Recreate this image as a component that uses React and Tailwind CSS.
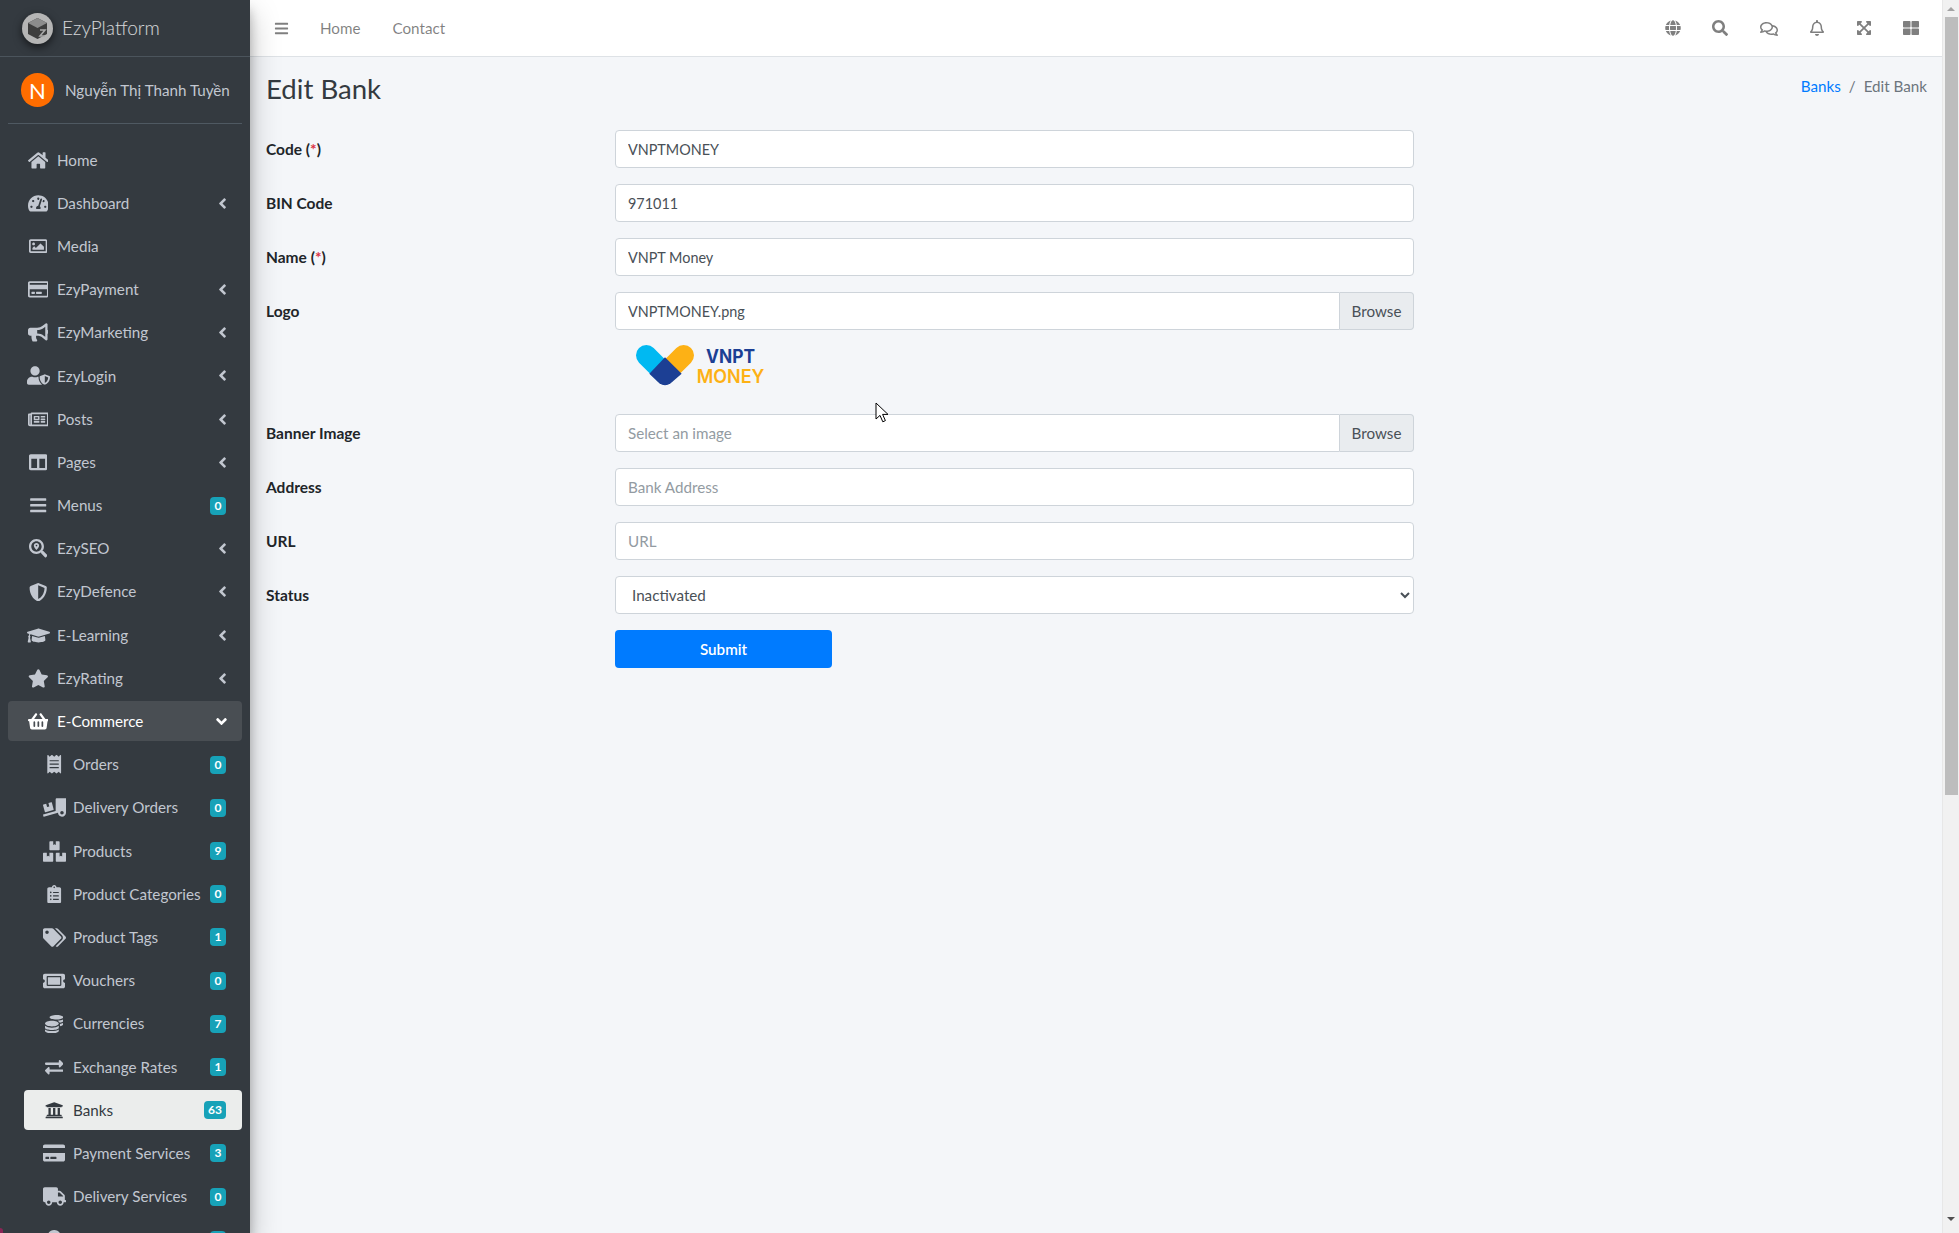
import {
  FaAngleDown,
  FaAngleLeft,
  FaBars,
  FaBoxes,
  FaBullhorn,
  FaClipboardList,
  FaCoins,
  FaColumns,
  FaCreditCard,
  FaExchangeAlt,
  FaExpandArrowsAlt,
  FaGlobe,
  FaGraduationCap,
  FaHome,
  FaMapMarkerAlt,
  FaReceipt,
  FaRegBell,
  FaRegComments,
  FaRegCreditCard,
  FaRegImage,
  FaRegNewspaper,
  FaSearch,
  FaSearchLocation,
  FaShieldAlt,
  FaShoppingBasket,
  FaStar,
  FaTachometerAlt,
  FaTags,
  FaThLarge,
  FaTicketAlt,
  FaTruck,
  FaTruckLoading,
  FaUniversity,
  FaUserShield,
} from 'react-icons/fa';

// icons share one height, so the wider glyphs need a bigger square
const WIDE = 20.7;
const WIDEST = 23;

const TOP_ITEMS = [
  { label: 'Home', icon: FaHome, size: WIDE },
  { label: 'Dashboard', icon: FaTachometerAlt, size: WIDE, arrow: true },
  { label: 'Media', icon: FaRegImage },
  { label: 'EzyPayment', icon: FaRegCreditCard, size: WIDE, arrow: true },
  { label: 'EzyMarketing', icon: FaBullhorn, size: WIDE, arrow: true },
  { label: 'EzyLogin', icon: FaUserShield, size: WIDEST, arrow: true },
  { label: 'Posts', icon: FaRegNewspaper, size: WIDE, arrow: true },
  { label: 'Pages', icon: FaColumns, arrow: true },
  { label: 'Menus', icon: FaBars, badge: 0 },
  { label: 'EzySEO', icon: FaSearchLocation, arrow: true },
  { label: 'EzyDefence', icon: FaShieldAlt, arrow: true },
  { label: 'E-Learning', icon: FaGraduationCap, size: WIDEST, arrow: true },
  { label: 'EzyRating', icon: FaStar, size: WIDE, arrow: true },
];

const SHOP_ITEMS = [
  { label: 'Orders', icon: FaReceipt, badge: 0 },
  { label: 'Delivery Orders', icon: FaTruckLoading, size: WIDEST, badge: 0 },
  { label: 'Products', icon: FaBoxes, size: WIDEST, badge: 9 },
  { label: 'Product Categories', icon: FaClipboardList, badge: 0 },
  { label: 'Product Tags', icon: FaTags, size: WIDEST, badge: 1 },
  { label: 'Vouchers', icon: FaTicketAlt, size: 22, badge: 0 },
  { label: 'Currencies', icon: FaCoins, badge: 7 },
  { label: 'Exchange Rates', icon: FaExchangeAlt, badge: 1 },
  { label: 'Banks', icon: FaUniversity, badge: 63, current: true },
  { label: 'Payment Services', icon: FaCreditCard, size: 22, badge: 3 },
  { label: 'Delivery Services', icon: FaTruck, size: WIDEST, badge: 0 },
  // only the top sliver of this row is on screen
  { label: '', icon: FaMapMarkerAlt, badge: '' },
];

const TOOLS = [
  { icon: FaGlobe, box: 'w-[47.6px]' },
  { icon: FaSearch, box: 'w-[47.6px]' },
  { icon: FaRegComments, box: 'w-[48.6px]', size: 18 },
  { icon: FaRegBell, box: 'w-[48.6px]' },
  { icon: FaExpandArrowsAlt, box: 'w-[46px]' },
  { icon: FaThLarge, box: 'w-[46.6px]' },
];

function NavRow({ item, sub, open }) {
  const Icon = item.icon;
  let tone = 'text-[#c2c7d0]';
  if (open) tone = 'bg-[#494e53] text-white';
  if (item.current) tone = 'bg-[#ebedec] text-[#343a40]';

  return (
    <div className={`${sub ? 'ml-4' : ''} mb-[3.2px] flex h-10 shrink-0 items-center rounded pl-4 pr-4 ${tone}`}>
      <span className="mr-[5px] flex w-7 shrink-0 justify-center">
        <Icon size={item.size || 18.4} className="shrink-0" />
      </span>
      <span className="flex-1 whitespace-nowrap">{item.label}</span>
      {item.badge !== undefined && (
        <span className="flex h-[18px] min-w-4 items-center justify-center rounded bg-[#17a2b8] px-1 text-[12px] font-bold leading-none text-white">
          {item.badge}
        </span>
      )}
      {item.arrow && (
        <span className="flex w-[7px] justify-center">
          <FaAngleLeft size={17} className="shrink-0" />
        </span>
      )}
      {open && (
        <span className="flex w-[9px] justify-center">
          <FaAngleDown size={17} className="shrink-0" />
        </span>
      )}
    </div>
  );
}

function Sidebar() {
  return (
    <aside className="relative z-10 flex h-screen w-[250px] shrink-0 flex-col overflow-hidden bg-[#343a40] shadow-[0_14px_28px_rgba(0,0,0,0.25),0_10px_10px_rgba(0,0,0,0.22)]">
      <div className="flex h-[57px] shrink-0 items-center border-b border-[#4b545c] pl-[22px]">
        <svg width="31" height="31" viewBox="0 0 31 31" className="drop-shadow-[0_3px_4px_rgba(0,0,0,0.6)]">
          <circle cx="15.5" cy="15.5" r="15.5" fill="#b5b5b5" />
          <path d="M15.5 5 25 10v11l-9.5 5L6 21V10z" fill="#3d3d3d" />
          <path d="M15.5 5 25 10l-9.5 5L6 10z" fill="#8c8c8c" />
          <path d="M18 17h5l-5 6h5" fill="none" stroke="#a8a8a8" strokeWidth="1.6" />
        </svg>
        <span className="ml-[9px] text-[19px] font-light text-white/80">EzyPlatform</span>
      </div>

      <div className="mx-2 flex h-[67px] shrink-0 items-center border-b border-[#4f5962] pl-[13px]">
        <span className="flex h-[34px] w-[33px] items-center justify-center rounded-full bg-[#ff6d00] text-[22px] text-white">
          N
        </span>
        <span className="ml-[11px] whitespace-nowrap text-[#c2c7d0]">Nguyễn Thị Thanh Tuyền</span>
      </div>

      <nav className="mt-4 flex flex-col pl-2 pr-2">
        {TOP_ITEMS.map((item) => (
          <NavRow key={item.label} item={item} />
        ))}
        <NavRow item={{ label: 'E-Commerce', icon: FaShoppingBasket, size: WIDE }} open />
        {SHOP_ITEMS.map((item) => (
          <NavRow key={item.label} item={item} sub />
        ))}
      </nav>

      {/* sliver of the window corner */}
      <span className="absolute bottom-0 left-0 h-[5px] w-[3px] rounded-tr bg-[#8a2456]" />
    </aside>
  );
}

function TopBar() {
  return (
    <header className="flex h-[57px] shrink-0 items-center border-b border-[#dee2e6] bg-white pl-6 pr-2 text-black/50">
      <FaBars size={15} />
      <span className="ml-[31px]">Home</span>
      <span className="ml-8">Contact</span>
      <div className="ml-auto flex pt-[1px]">
        {TOOLS.map(({ icon: Icon, box, size }, i) => (
          <span key={i} className={`flex justify-center ${box}`}>
            <Icon size={size || 16} />
          </span>
        ))}
      </div>
    </header>
  );
}

function Label({ children }) {
  return <label className="w-[349px] shrink-0 pt-[2px] text-[15.5px] font-bold text-[#212529]">{children}</label>;
}

function Field({ label, children }) {
  return (
    <div className="mb-4 flex items-center">
      <Label>{label}</Label>
      <div className="flex w-[799px]">{children}</div>
    </div>
  );
}

const Required = () => (
  <>
    {' ('}
    <span className="text-[#dc3545]">*</span>
    {')'}
  </>
);

function TextInput({ value, placeholder }) {
  return (
    <input
      className="h-[38px] w-full rounded border border-[#ced4da] bg-white px-3 text-[14.4px] text-[#495057] outline-none placeholder:text-[15.2px] placeholder:text-[#939ba2]"
      defaultValue={value}
      placeholder={placeholder}
      readOnly
    />
  );
}

function FileInput({ value, placeholder }) {
  return (
    <>
      <input
        className="h-[38px] flex-1 rounded-l border border-[#ced4da] bg-white px-3 text-[14.4px] text-[#495057] outline-none placeholder:text-[15.2px] placeholder:text-[#939ba2]"
        defaultValue={value}
        placeholder={placeholder}
        readOnly
      />
      <button
        type="button"
        className="h-[38px] w-[74px] rounded-r border border-l-0 border-[#ced4da] bg-[#e9ecef] text-[#495057]"
      >
        Browse
      </button>
    </>
  );
}

function VnptLogo() {
  return (
    <svg width="135" height="50" viewBox="99 186 405 150" className="ml-[18px]">
      <path d="M139 226 195 282" stroke="#00b9f2" strokeWidth="62" strokeLinecap="round" />
      <path d="M251 226 195 282" stroke="#fdb115" strokeWidth="62" strokeLinecap="round" />
      <path d="M195 232 245 281 212 310Q195 322 178 310L148 281Z" fill="#1c3f94" />
      <text x="318" y="248" fontFamily="Inter, sans-serif" fontWeight="700" fontSize="56" fill="#1c3f94" textLength="147" lengthAdjust="spacingAndGlyphs">
        VNPT
      </text>
      <text x="290" y="308" fontFamily="Inter, sans-serif" fontWeight="600" fontSize="56" fill="#fdb115" textLength="203" lengthAdjust="spacingAndGlyphs">
        MONEY
      </text>
    </svg>
  );
}

function BankForm() {
  return (
    <form className="pl-4">
      <Field label={<>Code<Required /></>}>
        <TextInput value="VNPTMONEY" />
      </Field>
      <Field label="BIN Code">
        <TextInput value="971011" />
      </Field>
      <Field label={<>Name<Required /></>}>
        <TextInput value="VNPT Money" />
      </Field>
      <div className="flex items-center">
        <Label>Logo</Label>
        <div className="flex w-[799px]">
          <FileInput value="VNPTMONEY.png" />
        </div>
      </div>
      <div className="mb-4 h-[68px] pl-[349px] pt-3">
        <VnptLogo />
      </div>
      <Field label="Banner Image">
        <FileInput placeholder="Select an image" />
      </Field>
      <Field label="Address">
        <TextInput placeholder="Bank Address" />
      </Field>
      <Field label="URL">
        <TextInput placeholder="URL" />
      </Field>
      <Field label="Status">
        <select
          className="h-[38px] w-full rounded border border-[#ced4da] bg-white px-3 text-[#495057] outline-none"
          defaultValue="0"
        >
          <option value="1">Activated</option>
          <option value="0">Inactivated</option>
        </select>
      </Field>
      <div className="pl-[349px]">
        <button type="button" className="h-[38px] w-[217px] rounded bg-[#007bff] font-semibold text-white">
          Submit
        </button>
      </div>
    </form>
  );
}

function FakeScrollbar() {
  return (
    <div className="flex h-screen w-[17px] shrink-0 flex-col items-center border-l border-[#e7e7e7] bg-[#f1f1f1]">
      <div className="flex h-[17px] shrink-0 items-center justify-center">
        <span className="h-0 w-0 border-x-[4px] border-b-[4px] border-x-transparent border-b-[#a3a3a3]" />
      </div>
      <div className="h-[778px] w-[13px] shrink-0 bg-[#bdbdbd]" />
      <div className="mt-auto flex h-[17px] shrink-0 items-start justify-center pt-[1px]">
        <span className="h-0 w-0 border-x-[4px] border-t-[4px] border-x-transparent border-t-[#505050]" />
      </div>
    </div>
  );
}

export default function App() {
  return (
    <div className="relative flex h-screen w-full overflow-hidden bg-[#f4f6f9] font-[Lato,'Noto_Sans',sans-serif] text-[15.2px]">
      <Sidebar />
      <main className="flex min-w-0 flex-1 flex-col">
        <TopBar />
        <div className="flex h-[73px] shrink-0 items-start justify-between pl-4 pr-[15px]">
          <h1 className="mt-[12px] text-[27.6px] leading-[40px] text-[#343a40]">Edit Bank</h1>
          <div className="mt-[18px] flex text-[#6c757d]">
            <span className="text-[#007bff]">Banks</span>
            <span className="mx-2">/</span>
            <span>Edit Bank</span>
          </div>
        </div>
        <BankForm />
      </main>
      <FakeScrollbar />

      {/* mouse pointer caught in the capture */}
      <svg width="14" height="22" viewBox="0 0 14 22" className="absolute left-[875px] top-[402px]">
        <path d="M1 1v16l4-3.6 2.8 6.4 2.6-1.2-2.8-6.2H13z" fill="#fff" stroke="#000" strokeWidth="1" />
      </svg>
    </div>
  );
}
